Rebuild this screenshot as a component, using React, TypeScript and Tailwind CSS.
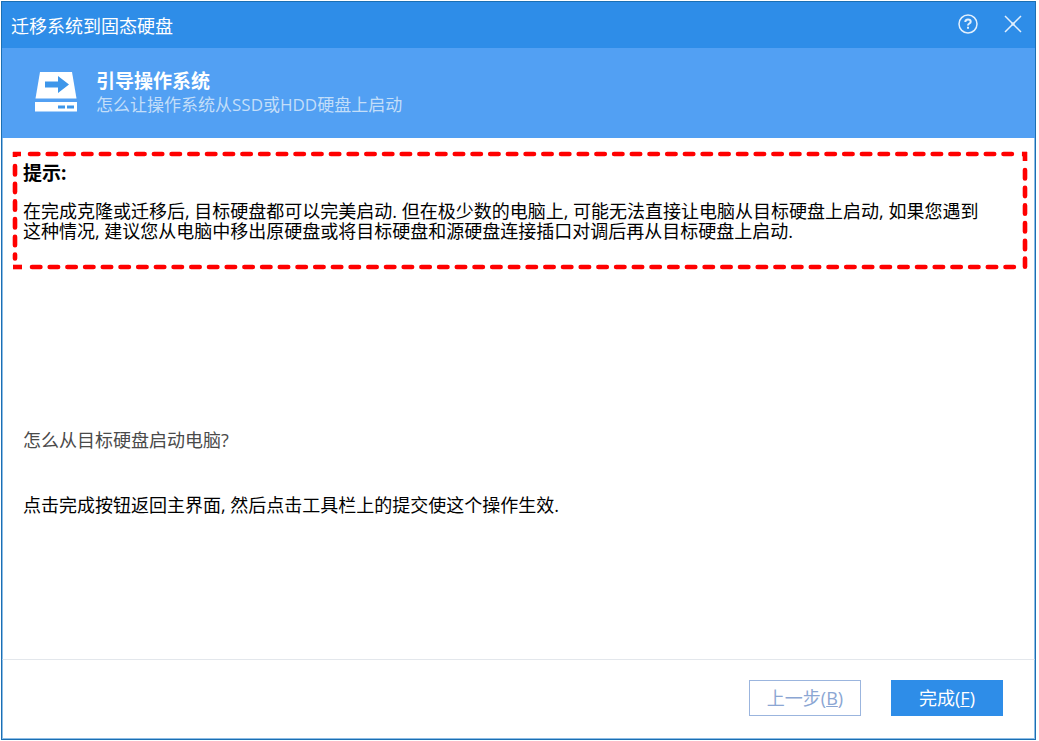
import type { ReactNode } from "react"

const dash = "8.4 9.3"

/* Red marker frame, stretches with its parent */
function MarkerFrame() {
  return (
    <svg className="absolute inset-0 size-full overflow-visible" fill="none" stroke="#ff0000" aria-hidden="true">
      <g strokeWidth="4.6" strokeLinecap="round" strokeDasharray={dash}>
        <line x1="17" y1="2" x2="99.2%" y2="2" />
        <line x1="19" y1="100%" x2="99%" y2="100%" transform="translate(0 -2)" />
        <line x1="2" y1="14" x2="2" y2="91%" />
        <line x1="100%" y1="18" x2="100%" y2="98%" transform="translate(-2 0)" />
      </g>
      <g strokeWidth="4.6">
        <path d="M0 2H8M2 0V5" />
        <line x1="0" y1="100%" x2="9" y2="100%" transform="translate(0 -2)" />
        <line x1="100%" y1="0" x2="100%" y2="9" transform="translate(-2 0)" />
        <line x1="99.5%" y1="2" x2="100%" y2="2" />
      </g>
    </svg>
  )
}

function DiskIcon() {
  return (
    <svg width="44" height="42" viewBox="0 0 44 42" fill="none" aria-hidden="true" className="shrink-0">
      <path fill="#fff" d="M6 0h32l4.500 26.500h-41z" />
      <path fill="#3d96ea" d="M11 9.500h13V4l11 8.500-11 8.500v-5.500H11z" />
      <path fill="#fff" d="M1 30h42v9.500H1z" />
      <path fill="#3d96ea" d="M24 33.500h7v3h-7zM33 33.500h7v3h-7z" />
    </svg>
  )
}

function HelpIcon() {
  return (
    <svg width="20" height="20" viewBox="0 0 20 20" fill="none" stroke="#e3f0fd" aria-hidden="true">
      <circle cx="10" cy="10" r="9" strokeWidth="1.500" />
      <path d="M7.300 8c0-1.800 1.200-2.500 2.700-2.500s2.700.8 2.700 2.200c0 1.900-2.700 1.800-2.700 3.800" strokeWidth="2" />
      <path d="M10 12.800v2" strokeWidth="2" />
    </svg>
  )
}

function CloseIcon() {
  return (
    <svg width="18" height="18" viewBox="0 0 18 18" fill="none" stroke="#e3f0fd" strokeWidth="1.500" aria-hidden="true">
      <path d="M1 1l16 16M17 1L1 17" />
      <path d="M7.500 9h3" strokeWidth="3" />
    </svg>
  )
}

function FooterButton({ className, children }: { className: string; children: ReactNode }) {
  return (
    <button type="button" className={`h-9 w-28 border text-lg leading-5 ${className}`}>
      {children}
    </button>
  )
}

export default function App() {
  return (
    <div className="flex min-h-screen bg-white pt-px pr-[3px] pb-px pl-px font-['Open_Sans','Noto_Sans_CJK_SC',sans-serif] text-lg leading-5 text-black">
      <div className="flex flex-1 flex-col border border-[#1b6fb3] bg-white">

        {/* Title bar */}
        <header className="flex h-[46px] items-center justify-between bg-[#2e8de8] pr-[13px] pl-[9px] text-white">
          <h1 className="pt-0.5 text-lg leading-6">迁移系统到固态硬盘</h1>
          <div className="flex items-center gap-[26px] pb-0.5">
            <button type="button" aria-label="帮助"><HelpIcon /></button>
            <button type="button" aria-label="关闭"><CloseIcon /></button>
          </div>
        </header>

        {/* Step heading */}
        <div className="flex h-[90px] items-center gap-[18px] bg-[#52a0f3] pl-8">
          <DiskIcon />
          <div>
            <h2 className="text-[19px] leading-6 font-bold text-white">引导操作系统</h2>
            <p className="text-[17px] leading-6 text-[#c3def9]">怎么让操作系统从SSD或HDD硬盘上启动</p>
          </div>
        </div>

        <main className="flex flex-1 flex-col border-x border-[#8dbde6] pt-3.5 pr-[7px] pl-2.5">
          <section className="relative pt-[11px] pr-4 pb-7 pl-2.5">
            <MarkerFrame />
            <h3 className="mb-[18px] text-[19px] leading-5 font-bold">提示:</h3>
            <p>
              在完成克隆或迁移后, 目标硬盘都可以完美启动. 但在极少数的电脑上, 可能无法直接让电脑从目标硬盘上启动, 如果您遇到
              <br />
              这种情况, 建议您从电脑中移出原硬盘或将目标硬盘和源硬盘连接插口对调后再从目标硬盘上启动.
            </p>
          </section>

          <section className="mt-[161px] pl-2.5">
            <h3 className="mb-[45px] text-[#4a4a4a]">怎么从目标硬盘启动电脑?</h3>
            <p>点击完成按钮返回主界面, 然后点击工具栏上的提交使这个操作生效.</p>
          </section>
        </main>

        <footer className="flex justify-end gap-[30px] border border-[#8dbde6] border-t-[#e3e7ec] pt-5 pr-[31px] pb-[22px]">
          <FooterButton className="border-[#9bb5de] bg-white text-[#8ba6d3]">
            上一步(<u>B</u>)
          </FooterButton>
          <FooterButton className="border-[#2e8de8] bg-[#2e8de8] text-white">
            完成(<u>F</u>)
          </FooterButton>
        </footer>
      </div>
    </div>
  )
}
